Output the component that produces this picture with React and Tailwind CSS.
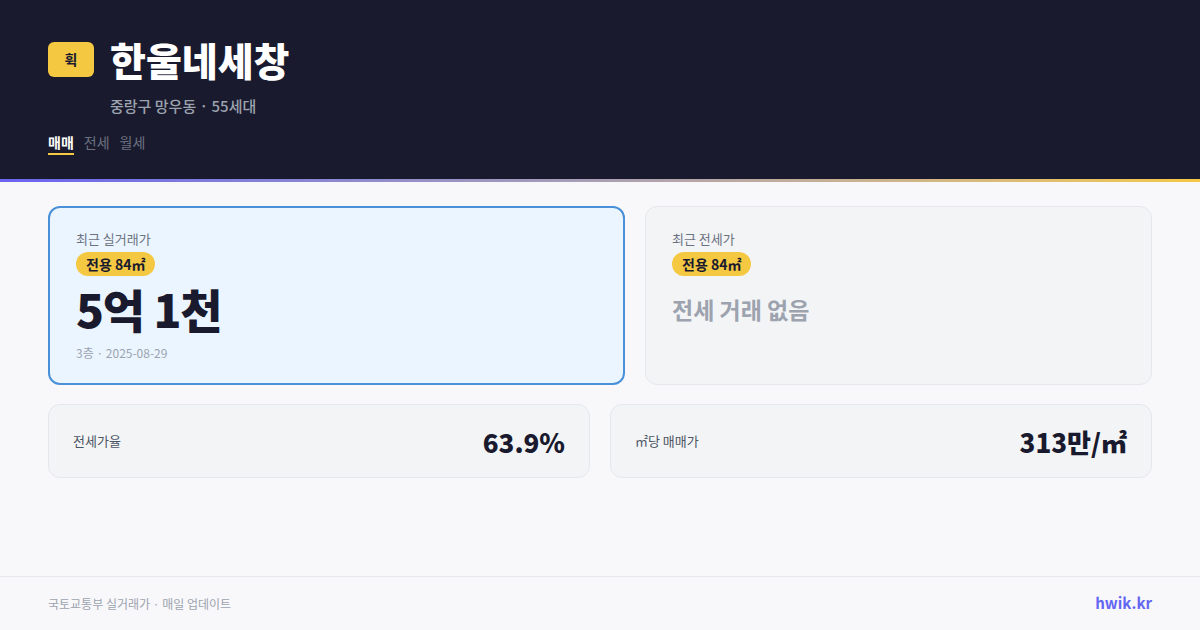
export default function App() {
  const font = { fontFamily: '"Noto Sans CJK KR", "Noto Sans", sans-serif' };
  return (
    <div
      className="flex h-[630px] w-[1200px] flex-col overflow-hidden bg-[#f8f8fa]"
      style={font}
    >
      {/* Header */}
      <header className="bg-[#1a1a2e] px-12 pt-[37px] pb-6">
        <div className="flex items-center gap-4">
          <div className="flex h-[35px] w-[46px] items-center justify-center rounded-md bg-[#f5c842] text-[14px] font-bold text-[#1a1a2e]">
            휙
          </div>
          <h1 className="text-[39px] leading-[45px] font-black text-white">
            한울네세창
          </h1>
        </div>
        <p className="mt-[14px] pl-[62px] text-[15px] leading-5 font-medium text-[#9ca3af]">
          중랑구 망우동 · 55세대
        </p>
        <nav className="mt-4 flex gap-[10px] text-[14px] leading-5">
          <span className="border-b-2 border-[#f5c842] pb-[1px] font-bold text-white">
            매매
          </span>
          <span className="text-[#6b7280]">전세</span>
          <span className="text-[#6b7280]">월세</span>
        </nav>
      </header>
      <div className="h-[3px] bg-gradient-to-r from-[#6c63f0] to-[#f5c842]" />

      {/* Main */}
      <main className="flex-1 px-12 pt-6">
        <div className="grid grid-cols-[577fr_507fr] gap-5">
          <div className="h-[179px] rounded-xl border-2 border-[#4a90d9] bg-[#ebf5ff] px-[26px] pt-[21px]">
            <p className="text-[13px] leading-5 text-[#6b7280]">최근 실거래가</p>
            <span className="mt-[3px] inline-block rounded-full bg-[#f5c842] px-[10px] text-[14px] leading-6 font-bold text-[#1a1a2e]">
              전용 84㎡
            </span>
            <p className="mt-[4px] text-[46px] leading-[56px] font-black tracking-tight text-[#1a1a2e]">
              5억 1천
            </p>
            <p className="mt-[9px] text-[12px] leading-4 text-[#9ca3af]">
              3층 · 2025-08-29
            </p>
          </div>
          <div className="h-[179px] rounded-xl border border-[#e5e7eb] bg-[#f3f4f6] px-[26px] pt-[22px]">
            <p className="text-[13px] leading-5 text-[#6b7280]">최근 전세가</p>
            <span className="mt-[3px] inline-block rounded-full bg-[#f5c842] px-[10px] text-[14px] leading-6 font-bold text-[#1a1a2e]">
              전용 84㎡
            </span>
            <p className="mt-[17px] text-[23px] leading-8 font-bold text-[#9ca3af]">
              전세 거래 없음
            </p>
          </div>
        </div>

        <div className="mt-[19px] grid grid-cols-2 gap-5">
          <div className="flex h-[74px] items-center justify-between rounded-xl border border-[#e5e7eb] bg-[#f3f4f6] px-6">
            <span className="text-[13px] text-[#4b5563]">전세가율</span>
            <span className="text-[26px] font-extrabold text-[#1a1a2e]">63.9%</span>
          </div>
          <div className="flex h-[74px] items-center justify-between rounded-xl border border-[#e5e7eb] bg-[#f3f4f6] px-6">
            <span className="text-[13px] text-[#4b5563]">㎡당 매매가</span>
            <span className="text-[26px] font-extrabold text-[#1a1a2e]">313만/㎡</span>
          </div>
        </div>
      </main>

      {/* Footer */}
      <footer className="flex h-[54px] items-center justify-between border-t border-[#e5e7eb] px-12">
        <span className="text-[12px] text-[#9ca3af]">국토교통부 실거래가 · 매일 업데이트</span>
        <span className="text-[15px] font-bold text-[#6366f1]">hwik.kr</span>
      </footer>
    </div>
  );
}
